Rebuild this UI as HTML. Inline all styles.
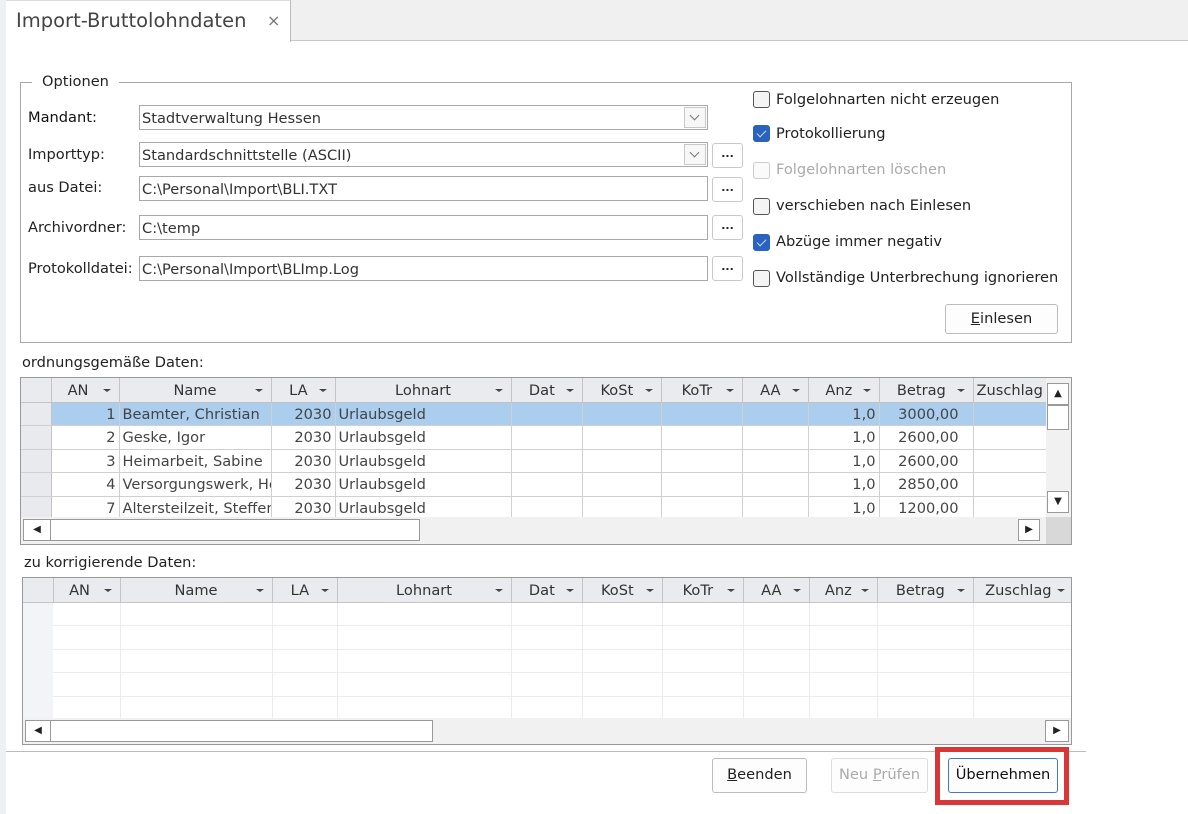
<!DOCTYPE html>
<html><head><meta charset="utf-8"><style>
*{box-sizing:border-box;margin:0;padding:0}
body{width:1188px;height:814px;background:#fff;font-family:"DejaVu Sans","Liberation Sans",sans-serif;font-size:14.6px;color:#222;position:relative;overflow:hidden}
.a{position:absolute}
.inp{position:absolute;border:1px solid #a9a9a9;background:#fff;height:25px;padding:3px 0 0 2px;white-space:nowrap;color:#333}
.dd{position:absolute;right:1px;top:1px;width:22px;height:21px;border:1px solid #c8c8c8;background:#f7f7f7}
.dd:after{content:"";position:absolute;left:6px;top:4px;width:6px;height:6px;border-right:1px solid #777;border-bottom:1px solid #777;transform:rotate(45deg)}
.dots{position:absolute;width:31px;height:25px;border:1px solid #c9c9c9;border-radius:3px;background:#fff;font-weight:bold;font-size:11px;text-align:center;line-height:20px}
.cb{position:absolute;width:17px;height:17px;border:1px solid #555;border-radius:3px;background:#f4f4f4}
.cb.on{background:#2a62c0;border-color:#2a62c0}
.cb.on:after{content:"";position:absolute;left:5px;top:2px;width:4px;height:8px;border-right:1.5px solid #cde;border-bottom:1.5px solid #cde;transform:rotate(45deg)}
.cb.dis{border-color:#ccc;background:#fafafa}
.cl{position:absolute;white-space:nowrap}
.btn{position:absolute;border:1px solid #bcbcbc;border-radius:3px;background:#fdfdfd;text-align:center;line-height:32px}
table{border-collapse:collapse;table-layout:fixed;position:absolute}
td,th{height:23.5px;border-right:1px solid #d0d0d0;border-bottom:1px solid #d0d0d0;white-space:nowrap;overflow:hidden;font-weight:normal;padding:1px 3px 0;color:#444;background:#fff}
th{background:#eaebee;border-right:1px solid #c4c4c4;border-bottom:1px solid #c4c4c4;height:24px;color:#333;position:relative}
th.f:after{content:"";position:absolute;right:8px;top:11px;border-left:4px solid transparent;border-right:4px solid transparent;border-top:3px solid #444}
td.ind{background:#e9eaed;border-right:1px solid #c4c4c4}
.r{text-align:right}
tr.sel td{background:#abcdee}
tr.sel td.ind{background:#e9eaed}
.g2 td{border-color:#ececec;height:23.5px}
.sb{position:absolute;border:1px solid #999;background:#fff}
</style></head><body>
<div class="a" style="left:0;top:0;width:1188px;height:41px;background:#f0f0f0;border-bottom:1px solid #c9c9c9"></div>
<div class="a" style="left:0;top:0;width:6px;height:814px;background:#eef0f3"></div>
<div class="a" style="left:6px;top:0;width:285px;height:42px;background:#fff;border-right:1px solid #bbb;border-top:1px solid #ddd"></div>
<div class="a" style="left:16px;top:9px;font-size:19.5px;color:#444">Import-Bruttolohndaten</div>
<div class="a" style="left:267px;top:11px;font-size:16px;color:#777">×</div>

<div class="a" style="left:20px;top:82px;width:1052px;height:261px;border:1px solid #a8a8a8"></div>
<div class="a" style="left:32px;top:73px;background:#fff;padding:0 10px;color:#222">Optionen</div>

<div class="cl" style="left:28px;top:109px;color:#111">Mandant:</div>
<div class="cl" style="left:28px;top:146px">Importtyp:</div>
<div class="cl" style="left:28px;top:179px">aus Datei:</div>
<div class="cl" style="left:28px;top:219px">Archivordner:</div>
<div class="cl" style="left:28px;top:260px">Protokolldatei:</div>

<div class="inp" style="left:139px;top:105px;width:569px;padding-top:4px">Stadtverwaltung Hessen<div class="dd"></div></div>
<div class="inp" style="left:139px;top:142px;width:569px;padding-top:4px">Standardschnittstelle (ASCII)<div class="dd"></div></div>
<div class="inp" style="left:139px;top:176px;width:569px;padding-top:4px">C:\Personal\Import\BLI.TXT</div>
<div class="inp" style="left:139px;top:215px;width:569px;padding-top:4px">C:\temp</div>
<div class="inp" style="left:139px;top:256px;width:569px;padding-top:4px">C:\Personal\Import\BLImp.Log</div>
<div class="dots" style="left:712px;top:143px">...</div>
<div class="dots" style="left:712px;top:177px">...</div>
<div class="dots" style="left:712px;top:215px">...</div>
<div class="dots" style="left:712px;top:256px">...</div>

<div class="cb" style="left:753px;top:91px"></div><div class="cl" style="left:776px;top:91px">Folgelohnarten nicht erzeugen</div>
<div class="cb on" style="left:753px;top:125px"></div><div class="cl" style="left:776px;top:125px">Protokollierung</div>
<div class="cb dis" style="left:753px;top:162px"></div><div class="cl" style="left:776px;top:161px;color:#aaa">Folgelohnarten löschen</div>
<div class="cb" style="left:753px;top:198px"></div><div class="cl" style="left:776px;top:197px">verschieben nach Einlesen</div>
<div class="cb on" style="left:753px;top:234px"></div><div class="cl" style="left:776px;top:233px">Abzüge immer negativ</div>
<div class="cb" style="left:753px;top:270px"></div><div class="cl" style="left:776px;top:269px">Vollständige Unterbrechung ignorieren</div>
<div class="btn" style="left:945px;top:304px;width:113px;height:30px;line-height:28px"><u>E</u>inlesen</div>

<div class="cl" style="left:22px;top:354px">ordnungsgemäße Daten:</div>
<div class="a" style="left:20px;top:377px;width:1052px;height:168px;border:1px solid #999;background:#f1f1f1;overflow:hidden">
<table style="left:0;top:0;width:1025px">
<colgroup><col style="width:30px"><col style="width:68px"><col style="width:152px"><col style="width:64px"><col style="width:176px"><col style="width:71px"><col style="width:79px"><col style="width:81px"><col style="width:66px"><col style="width:71px"><col style="width:94px"><col style="width:73px"></colgroup>
<tr><th style="background:#eaebee"></th><th class="f">AN&nbsp;&nbsp;&nbsp;</th><th class="f">Name</th><th class="f">LA&nbsp;&nbsp;</th><th class="f">Lohnart</th><th class="f">Dat&nbsp;&nbsp;</th><th class="f">KoSt&nbsp;&nbsp;</th><th class="f">KoTr&nbsp;&nbsp;</th><th class="f">AA&nbsp;&nbsp;</th><th class="f">Anz&nbsp;&nbsp;</th><th class="f">Betrag&nbsp;&nbsp;</th><th style="text-align:left">Zuschlag</th></tr>
<tr class="sel"><td class="ind"></td><td class="r">1</td><td>Beamter, Christian</td><td class="r">2030</td><td>Urlaubsgeld</td><td></td><td></td><td></td><td></td><td class="r">1,0</td><td class="r" style="padding-right:14px">3000,00</td><td></td></tr>
<tr><td class="ind"></td><td class="r">2</td><td>Geske, Igor</td><td class="r">2030</td><td>Urlaubsgeld</td><td></td><td></td><td></td><td></td><td class="r">1,0</td><td class="r" style="padding-right:14px">2600,00</td><td></td></tr>
<tr><td class="ind"></td><td class="r">3</td><td>Heimarbeit, Sabine</td><td class="r">2030</td><td>Urlaubsgeld</td><td></td><td></td><td></td><td></td><td class="r">1,0</td><td class="r" style="padding-right:14px">2600,00</td><td></td></tr>
<tr><td class="ind"></td><td class="r">4</td><td>Versorgungswerk, Heinz</td><td class="r">2030</td><td>Urlaubsgeld</td><td></td><td></td><td></td><td></td><td class="r">1,0</td><td class="r" style="padding-right:14px">2850,00</td><td></td></tr>
<tr><td class="ind"></td><td class="r">7</td><td>Altersteilzeit, Steffen</td><td class="r">2030</td><td>Urlaubsgeld</td><td></td><td></td><td></td><td></td><td class="r">1,0</td><td class="r" style="padding-right:14px">1200,00</td><td></td></tr>
</table>
<div class="a" style="left:0;top:139px;width:1025px;height:27px;background:#f1f1f1"></div>
<div class="sb" style="left:2px;top:141px;width:28px;height:22px;font-size:10px;text-align:center;line-height:20px">◀</div>
<div class="sb" style="left:29px;top:141px;width:370px;height:22px"></div>
<div class="sb" style="left:997px;top:141px;width:22px;height:22px;font-size:10px;text-align:center;line-height:20px">▶</div>
<div class="a" style="left:1025px;top:0;width:25px;height:139px;background:#f1f1f1"></div>
<div class="sb" style="left:1026px;top:5px;width:22px;height:22px;font-size:10px;text-align:center;line-height:20px">▲</div>
<div class="sb" style="left:1026px;top:27px;width:22px;height:25px"></div>
<div class="sb" style="left:1026px;top:113px;width:22px;height:22px;font-size:10px;text-align:center;line-height:20px">▼</div>
<div class="a" style="left:1025px;top:139px;width:25px;height:27px;background:#d8d8d8"></div>
</div>

<div class="cl" style="left:24px;top:554px">zu korrigierende Daten:</div>
<div class="a g2" style="left:22px;top:577px;width:1050px;height:168px;border:1px solid #999;background:#fff;overflow:hidden">
<table style="left:0;top:0;width:1050px">
<colgroup><col style="width:30px"><col style="width:67px"><col style="width:152px"><col style="width:65px"><col style="width:174px"><col style="width:71px"><col style="width:80px"><col style="width:81px"><col style="width:66px"><col style="width:68px"><col style="width:96px"><col style="width:100px"></colgroup>
<tr><th></th><th class="f">AN&nbsp;&nbsp;&nbsp;</th><th class="f">Name</th><th class="f">LA&nbsp;&nbsp;</th><th class="f">Lohnart</th><th class="f">Dat&nbsp;&nbsp;</th><th class="f">KoSt&nbsp;&nbsp;</th><th class="f">KoTr&nbsp;&nbsp;</th><th class="f">AA&nbsp;&nbsp;</th><th class="f">Anz&nbsp;&nbsp;</th><th class="f">Betrag&nbsp;&nbsp;</th><th class="f">Zuschlag&nbsp;&nbsp;</th></tr>
<tr><td class="ind" style="background:#f3f4f8;border:none"></td><td></td><td></td><td></td><td></td><td></td><td></td><td></td><td></td><td></td><td></td><td></td></tr>
<tr><td class="ind" style="background:#f3f4f8;border:none"></td><td></td><td></td><td></td><td></td><td></td><td></td><td></td><td></td><td></td><td></td><td></td></tr>
<tr><td class="ind" style="background:#f3f4f8;border:none"></td><td></td><td></td><td></td><td></td><td></td><td></td><td></td><td></td><td></td><td></td><td></td></tr>
<tr><td class="ind" style="background:#f3f4f8;border:none"></td><td></td><td></td><td></td><td></td><td></td><td></td><td></td><td></td><td></td><td></td><td></td></tr>
<tr><td class="ind" style="background:#f3f4f8;border:none"></td><td></td><td></td><td></td><td></td><td></td><td></td><td></td><td></td><td></td><td></td><td></td></tr>
</table>
<div class="a" style="left:0;top:140px;width:1050px;height:28px;background:#f1f1f1"></div>
<div class="sb" style="left:2px;top:142px;width:26px;height:22px;font-size:10px;text-align:center;line-height:20px">◀</div>
<div class="sb" style="left:27px;top:142px;width:383px;height:22px"></div>
<div class="sb" style="left:1022px;top:142px;width:24px;height:22px;font-size:10px;text-align:center;line-height:20px">▶</div>
</div>

<div class="a" style="left:6px;top:751px;width:1080px;height:1px;background:#bbb"></div>
<div class="btn" style="left:712px;top:758px;width:95px;height:35px"><u>B</u>eenden</div>
<div class="btn" style="left:831px;top:758px;width:97px;height:35px;color:#aaa;border-color:#ddd">Neu <u>P</u>rüfen</div>
<div class="a" style="left:935px;top:747px;width:134px;height:58px;border:5px solid #d93636"></div>
<div class="btn" style="left:948px;top:758px;width:110px;height:35px;border:1.5px solid #3d7bd1;color:#111">Übernehmen</div>
</body></html>
